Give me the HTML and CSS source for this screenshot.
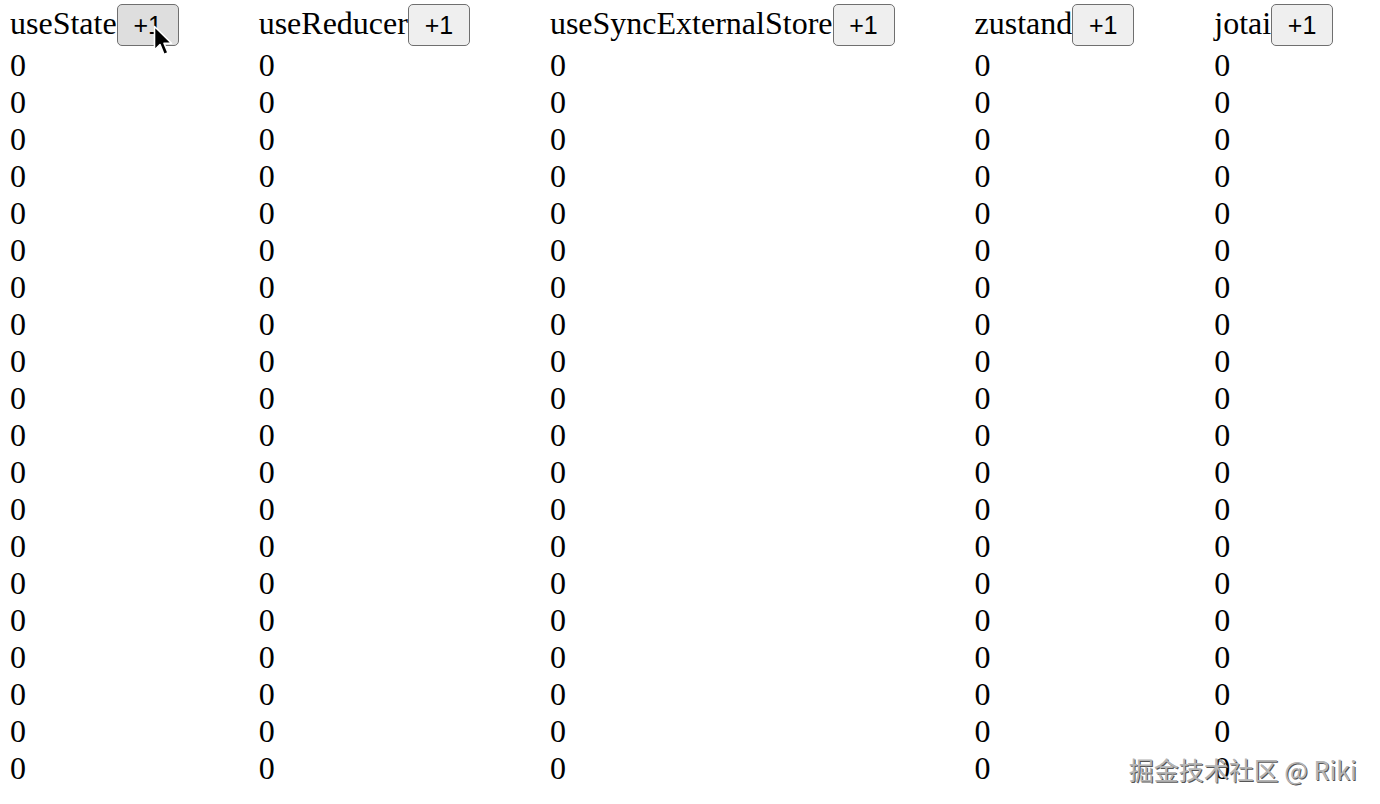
FILE: index.html
```html
<!DOCTYPE html>
<html lang="en">
<head>
  <meta charset="UTF-8">
  <meta name="viewport" content="width=device-width, initial-scale=1.0">
  <title>State Libraries Render Test</title>
  <link rel="stylesheet" href="styles.css">
</head>
<body>
  <div class="board" id="board"></div>

  <svg class="cursor" width="22" height="34" viewBox="0 0 22 34">
    <path d="M1.5 1.5 L1.5 25 L7 19.5 L11 29.5 L15 27.8 L11 18.2 L18.5 18.2 Z" fill="#000" stroke="#fff" stroke-width="1.6" stroke-linejoin="round"/>
  </svg>

  <div class="watermark">掘金技术社区 @ Riki</div>

  <script>
    const stores = ['useState', 'useReducer', 'useSyncExternalStore', 'zustand', 'jotai'];
    const board = document.getElementById('board');
    const rowCount = 20;

    stores.forEach(function (name, index) {
      const col = document.createElement('div');
      col.className = 'col';

      let rows = '';
      for (let i = 0; i < rowCount; i++) {
        rows += '<div class="cell">0</div>';
      }

      col.innerHTML = `
        <div class="col-head">
          <span class="col-name">${name}</span>
          <button class="inc-btn${index === 0 ? ' is-hover' : ''}">+1</button>
        </div>
        ${rows}
      `;
      board.appendChild(col);
    });
  </script>
</body>
</html>
```

FILE: styles.css
```css
* {
  margin: 0;
  padding: 0;
  box-sizing: border-box;
}
body {
  font-family: "Liberation Serif", "Times New Roman", serif;
  font-size: 32px;
  color: #000;
  background-color: #fff;
  width: 100%;
  height: 804px;
  overflow: hidden;
}
.board {
  display: flex;
  gap: 80px;
  padding: 0 10px;
}
.col {
  display: flex;
  flex-direction: column;
}
.col-head {
  display: flex;
  align-items: baseline;
  height: 47px;
  padding-top: 4px;
}
.col-name {
  line-height: 37px;
}
.cell {
  line-height: 37px;
}
.inc-btn {
  font-family: "Liberation Sans", Arial, sans-serif;
  font-size: 25px;
  height: 42px;
  width: 62px;
  padding: 0;
  color: #000;
  background-color: #efefef;
  border: 1px solid #6f6f6f;
  border-radius: 5px;
  cursor: pointer;
}
.inc-btn:hover,
.inc-btn.is-hover {
  background-color: #dedede;
}
.cursor {
  position: absolute;
  left: 153px;
  top: 25px;
}
.watermark {
  position: absolute;
  right: 23px;
  bottom: 20px;
  font-family: "Noto Sans CJK SC", "Liberation Sans", sans-serif;
  font-size: 25px;
  color: #b5b5b5;
  text-shadow: 1px 1px 0 #555;
  line-height: 30px;
}
```
